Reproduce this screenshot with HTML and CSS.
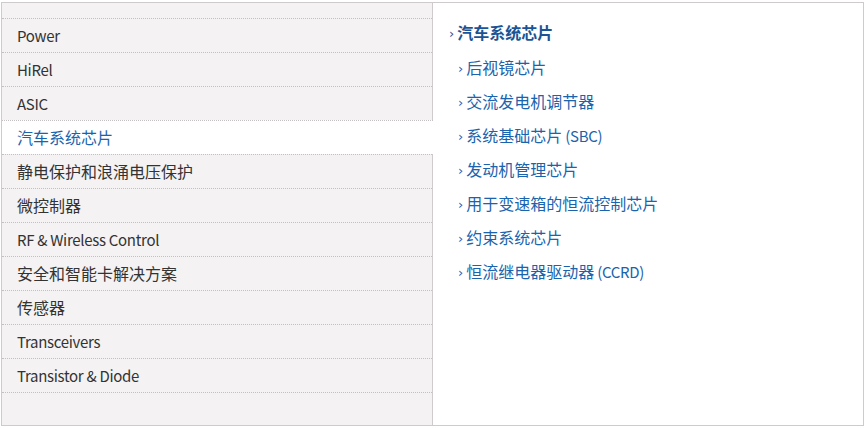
FILE: index.html
```html
<!DOCTYPE html>
<html lang="zh">
<head>
<meta charset="utf-8">
<link rel="stylesheet" href="styles.css">
</head>
<body>
<div class="panel">
  <ul class="side">
    <li class="side-item en">Power</li>
    <li class="side-item en">HiRel</li>
    <li class="side-item en">ASIC</li>
    <li class="side-item active">汽车系统芯片</li>
    <li class="side-item">静电保护和浪涌电压保护</li>
    <li class="side-item">微控制器</li>
    <li class="side-item en">RF &amp; Wireless Control</li>
    <li class="side-item">安全和智能卡解决方案</li>
    <li class="side-item">传感器</li>
    <li class="side-item en">Transceivers</li>
    <li class="side-item en">Transistor &amp; Diode</li>
  </ul>
  <div class="content">
    <div class="title"><span class="arr">›</span>汽车系统芯片</div>
    <ul class="sub">
      <li class="sub-item"><span class="arr">›</span>后视镜芯片</li>
      <li class="sub-item"><span class="arr">›</span>交流发电机调节器</li>
      <li class="sub-item"><span class="arr">›</span>系统基础芯片<span class="en"> (SBC)</span></li>
      <li class="sub-item"><span class="arr">›</span>发动机管理芯片</li>
      <li class="sub-item"><span class="arr">›</span>用于变速箱的恒流控制芯片</li>
      <li class="sub-item"><span class="arr">›</span>约束系统芯片</li>
      <li class="sub-item"><span class="arr">›</span>恒流继电器驱动器<span class="en"> (CCRD)</span></li>
    </ul>
  </div>
</div>
</body>
</html>
```
FILE: styles.css
```css
* { box-sizing: border-box; }
html, body { margin: 0; padding: 0; background: #fff; }
body {
  padding: 2px 4px 2px 1px;
  font-family: "Noto Sans CJK SC", "Noto Sans", sans-serif;
  font-size: 16px;
  color: #333;
}
.en {
  font-size: 15px;
  letter-spacing: -0.3px;
}
.panel {
  display: flex;
  height: 424px;
  border: 1px solid #cfcbcc;
  background: #fff;
}
.side {
  list-style: none;
  margin: 0;
  padding: 15px 0 0;
  width: 431px;
  background: #f4f2f3;
  border-right: 1px solid #cfcbcc;
  flex: none;
}
.side-item {
  height: 34px;
  line-height: 33px;
  padding-left: 15px;
  border-top: 1px dotted #c4c0c1;
  color: #333;
  white-space: nowrap;
}
.side-item:last-child { border-bottom: 1px dotted #c4c0c1; height: 35px; }
.side-item.active {
  background: #fff;
  color: #1a63ad;
  margin-right: -1px;
  position: relative;
}
.content {
  flex: 1;
  padding: 14px 0 0 16px;
}
.title {
  font-size: 16px;
  font-weight: bold;
  color: #1a5495;
  line-height: 30px;
  margin-bottom: 1px;
}
.arr {
  display: inline-block;
  font-family: "DejaVu Sans", sans-serif;
  font-size: 13px;
  font-weight: normal;
  margin-right: 3px;
  vertical-align: 1px;
}
.sub {
  list-style: none;
  margin: 0;
  padding: 0 0 0 9px;
}
.sub-item {
  height: 34px;
  line-height: 34px;
  color: #1a63ad;
}
```
